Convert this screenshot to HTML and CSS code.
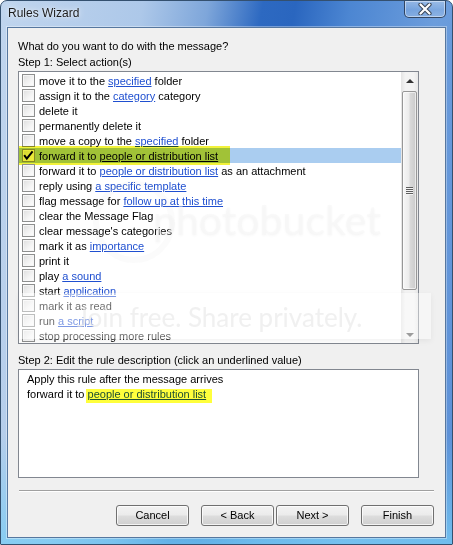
FILE: index.html
```html
<!DOCTYPE html>
<html>
<head>
<meta charset="utf-8">
<title>Rules Wizard</title>
<link rel="stylesheet" href="styles.css">
</head>
<body>
<div class="window">
  <div class="titlebar">
    <span class="title">Rules Wizard</span>
    <div class="close">
      <svg width="14" height="12" viewBox="0 0 14 12">
        <path d="M2.5 1.5 L11.5 10.5 M11.5 1.5 L2.5 10.5" stroke="#3a4656" stroke-width="4.2" stroke-linecap="round" fill="none"/>
        <path d="M2.5 1.5 L11.5 10.5 M11.5 1.5 L2.5 10.5" stroke="#ffffff" stroke-width="2.2" stroke-linecap="round" fill="none"/>
      </svg>
    </div>
  </div>
  <div class="client">
    <p class="q">What do you want to do with the message?</p>
    <p class="label">Step 1: Select action(s)</p>
    <div class="listbox">
      <div class="rows">
        <div class="row"><span class="cb"></span><span>move it to the <a>specified</a> folder</span></div>
        <div class="row"><span class="cb"></span><span>assign it to the <a>category</a> category</span></div>
        <div class="row"><span class="cb"></span><span>delete it</span></div>
        <div class="row"><span class="cb"></span><span>permanently delete it</span></div>
        <div class="row"><span class="cb"></span><span>move a copy to the <a>specified</a> folder</span></div>
        <div class="row sel"><span class="cb"><svg width="11" height="11" viewBox="0 0 11 11"><path d="M1.2 5.2 L3.8 8.6 L9.6 1.4" stroke="#000" stroke-width="2" fill="none"/></svg></span><span>forward it to <a class="dark">people or distribution list</a></span><span class="hl"></span></div>
        <div class="row"><span class="cb"></span><span>forward it to <a>people or distribution list</a> as an attachment</span></div>
        <div class="row"><span class="cb"></span><span>reply using <a>a specific template</a></span></div>
        <div class="row"><span class="cb"></span><span>flag message for <a>follow up at this time</a></span></div>
        <div class="row"><span class="cb"></span><span>clear the Message Flag</span></div>
        <div class="row"><span class="cb"></span><span>clear message's categories</span></div>
        <div class="row"><span class="cb"></span><span>mark it as <a>importance</a></span></div>
        <div class="row"><span class="cb"></span><span>print it</span></div>
        <div class="row"><span class="cb"></span><span>play <a>a sound</a></span></div>
        <div class="row"><span class="cb"></span><span>start <a>application</a></span></div>
        <div class="row"><span class="cb"></span><span>mark it as read</span></div>
        <div class="row"><span class="cb"></span><span>run <a>a script</a></span></div>
        <div class="row"><span class="cb"></span><span>stop processing more rules</span></div>
      </div>
      <div class="scrollbar">
        <div class="arrow"><span class="tri up"></span></div>
        <div class="track">
          <div class="thumb"><span class="grip"></span></div>
        </div>
        <div class="arrow"><span class="tri down"></span></div>
      </div>
    </div>
    <p class="label step2">Step 2: Edit the rule description (click an underlined value)</p>
    <div class="desc">
      <div class="line">Apply this rule after the message arrives</div>
      <div class="line">forward it to <a class="marked">people or distribution list</a></div>
    </div>
    <div class="sep"></div>
    <div class="buttons">
      <div class="btn gap-l">Cancel</div>
      <div class="btn gap-s">&lt; Back</div>
      <div class="btn gap-l">Next &gt;</div>
      <div class="btn">Finish</div>
    </div>
  </div>
  <div class="watermark">
    <div class="wm-ring"></div>
    <div class="wm-logo">photobucket</div>
    <div class="wm-band"></div>
    <div class="wm-text">Join free. Share privately.</div>
  </div>
</div>
</body>
</html>
```
FILE: styles.css
```css
html, body {
  margin: 0;
  padding: 0;
  background: #ffffff;
}

.window {
  position: relative;
  width: 453px;
  height: 545px;
  box-sizing: border-box;
  border: 1px solid #34506f;
  border-radius: 7px 7px 1px 1px;
  display: flex;
  flex-direction: column;
  overflow: hidden;
  font-family: "Liberation Sans", Arial, sans-serif;
  font-size: 11px;
  color: #000;
  background:
    linear-gradient(to bottom, rgba(120, 205, 245, 0) 0%, rgba(120, 205, 245, 0) 80%, rgba(120, 205, 245, 0.75) 100%),
    linear-gradient(100deg, #c0d5ee 0%, #adc8e9 26%, #7ea6da 38%, #2d69c1 48%, #2a66bf 54%, #4c86d2 64%, #6c9ddc 80%, #5a8fd7 100%);
}

.titlebar {
  height: 26px;
  display: flex;
  align-items: flex-start;
  padding: 0 6px 0 7px;
  flex: none;
}

.title {
  font-size: 12px;
  line-height: 25px;
  color: #1b1b1b;
  text-shadow: 0 0 6px rgba(255, 255, 255, 0.9), 0 0 2px rgba(255, 255, 255, 0.6);
}

.close {
  margin-left: auto;
  width: 42px;
  height: 18px;
  box-sizing: border-box;
  margin-top: -1px;
  border: 1px solid rgba(28, 42, 66, 0.8);
  border-radius: 0 0 5px 5px;
  background: linear-gradient(to bottom, rgba(255, 255, 255, 0.32), rgba(255, 255, 255, 0.12) 55%, rgba(255, 255, 255, 0.22));
  box-shadow: inset 0 0 0 1px rgba(255, 255, 255, 0.45);
  display: flex;
  align-items: center;
  justify-content: center;
}

.client {
  flex: 1;
  margin: 0 6px 6px;
  border: 1px solid #56779f;
  box-shadow: 0 0 0 1px rgba(255, 255, 255, 0.35);
  background: #f0f0f0;
  padding: 10px 11px 0 10px;
  display: flex;
  flex-direction: column;
}

.q, .label {
  margin: 0;
  line-height: 16px;
  white-space: nowrap;
}

.listbox {
  margin-top: 1px;
  width: 401px;
  height: 273px;
  box-sizing: border-box;
  border: 1px solid #828790;
  background: #ffffff;
  display: flex;
  flex: none;
}

.rows {
  flex: 1;
  padding-top: 1px;
  overflow: hidden;
  position: relative;
}

.row {
  position: relative;
  height: 15px;
  line-height: 16px;
  display: flex;
  align-items: center;
  white-space: nowrap;
}

.row.sel {
  background: #aacdf0;
}

.cb {
  width: 13px;
  height: 13px;
  box-sizing: border-box;
  margin: 0 4px 0 3px;
  border: 1px solid #8e8f8f;
  background: linear-gradient(135deg, #dedede 0%, #f4f4f4 60%, #ffffff 100%);
  box-shadow: inset 0 0 0 1px #f6f6f6;
  flex: none;
  display: flex;
}

.cb svg {
  display: block;
}

a {
  color: #1f4fd0;
  text-decoration: underline;
}

a.dark {
  color: #000;
}

.hl {
  position: absolute;
  left: -1px;
  top: -2px;
  width: 212px;
  height: 19px;
  background: #f2f23a;
  mix-blend-mode: multiply;
}

.scrollbar {
  width: 17px;
  flex: none;
  display: flex;
  flex-direction: column;
  background: linear-gradient(to right, #e4e4e4 0%, #f3f3f3 25%, #f3f3f3 75%, #e8e8e8 100%);
}

.arrow {
  height: 17px;
  flex: none;
  display: flex;
  align-items: center;
  justify-content: center;
}

.tri {
  width: 0;
  height: 0;
  border-left: 4px solid transparent;
  border-right: 4px solid transparent;
}

.tri.up {
  border-bottom: 4px solid #333;
}

.tri.down {
  border-top: 4px solid #555;
}

.track {
  flex: 1;
  padding: 2px 1px 0;
}

.thumb {
  height: 199px;
  box-sizing: border-box;
  border: 1px solid #979797;
  border-radius: 2px;
  background: linear-gradient(to right, #f6f6f6 0%, #ececec 45%, #d9d9d9 55%, #cbcbcb 100%);
  box-shadow: inset 0 0 0 1px rgba(255, 255, 255, 0.6);
  display: flex;
  align-items: center;
  justify-content: center;
}

.grip {
  width: 7px;
  height: 8px;
  background: repeating-linear-gradient(to bottom, #5e5e5e 0 1px, #f4f4f4 1px 2px);
}

.step2 {
  margin-top: 8px;
  line-height: 17px;
}

.desc {
  width: 401px;
  height: 109px;
  box-sizing: border-box;
  border: 1px solid #828790;
  background: #ffffff;
  padding: 2px 8px;
  flex: none;
}

.line {
  line-height: 15px;
  white-space: nowrap;
}

.marked {
  position: relative;
}

.marked::after {
  content: "";
  position: absolute;
  left: -2px;
  right: -6px;
  top: 1px;
  bottom: -3px;
  background: #ffff3c;
  mix-blend-mode: multiply;
}

.sep {
  margin: 12px 0 0 1px;
  border-top: 1px solid #a0a0a0;
  border-bottom: 1px solid #ffffff;
  flex: none;
}

.buttons {
  margin-top: 13px;
  display: flex;
  justify-content: flex-end;
}

.btn {
  width: 73px;
  height: 21px;
  box-sizing: border-box;
  border: 1px solid #707070;
  border-radius: 3px;
  background: linear-gradient(to bottom, #f3f3f3 0%, #ebebeb 48%, #dddddd 52%, #cfcfcf 100%);
  box-shadow: inset 0 0 0 1px rgba(255, 255, 255, 0.75);
  display: flex;
  align-items: center;
  justify-content: center;
  line-height: 15px;
}

.gap-l {
  margin-right: 12px;
}

.gap-s {
  margin-right: 2px;
}

/* photobucket watermark overlay */
.watermark {
  position: absolute;
  inset: 0;
  pointer-events: none;
}

.wm-ring {
  position: absolute;
  left: 92px;
  top: 180px;
  width: 70px;
  height: 70px;
  border-radius: 50%;
  border: 6px solid rgba(200, 200, 200, 0.08);
}

.wm-logo {
  position: absolute;
  left: 152px;
  top: 194px;
  font-family: Lato, "Open Sans", sans-serif;
  font-size: 41px;
  line-height: 50px;
  color: rgba(245, 245, 245, 0.5);
  text-shadow: 0 1px 3px rgba(0, 0, 0, 0.035);
}

.wm-band {
  position: absolute;
  left: 18px;
  top: 292px;
  width: 412px;
  height: 46px;
  background: rgba(255, 255, 255, 0.42);
  box-shadow: 0 2px 6px rgba(0, 0, 0, 0.06);
}

.wm-text {
  position: absolute;
  left: 76px;
  top: 299px;
  font-family: Lato, "Open Sans", sans-serif;
  font-size: 26px;
  line-height: 34px;
  color: rgba(228, 228, 228, 0.55);
  white-space: nowrap;
}
```
